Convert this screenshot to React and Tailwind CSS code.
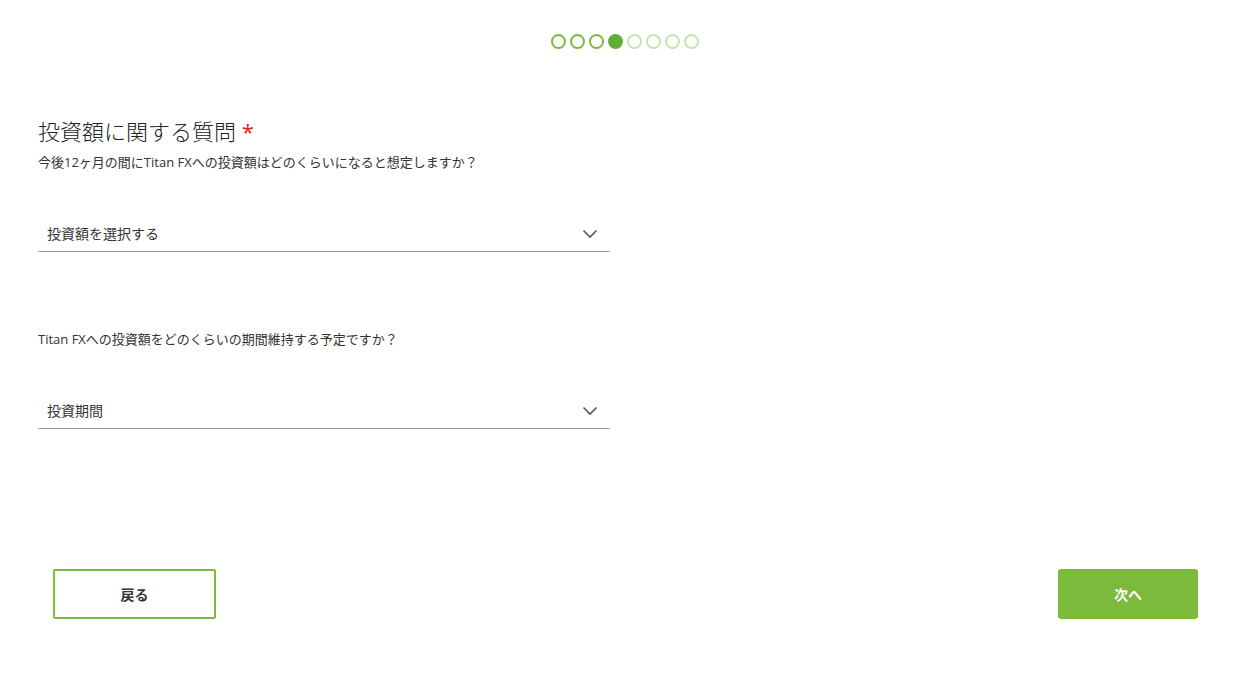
import React from "react";

const steps = [1, 2, 3, 4, 5, 6, 7, 8];
const current = 4;

const Chevron = () => (
  <svg width="16" height="10" viewBox="0 0 16 10" fill="none">
    <path d="M1.5 1.5 L8 8 L14.5 1.5" stroke="#555" strokeWidth="1.6" />
  </svg>
);

const SelectBox = ({ label }) => (
  <div className="w-[572px] h-[36px] flex items-center justify-between pl-[9px] pr-[12px] border-b border-[#9a9a9a] text-[14px] text-[#333]">
    <span>{label}</span>
    <Chevron />
  </div>
);

export default function App() {
  return (
    <div
      className="w-[1252px] h-[691px] bg-white relative"
      style={{ fontFamily: '"Open Sans", "Noto Sans CJK JP", sans-serif' }}
    >
      {/* steps */}
      <div className="flex justify-center gap-[4px] pt-[34px] pr-[3px]">
        {steps.map((s) => (
          <div
            key={s}
            className={
              s < current
                ? "w-[15px] h-[15px] rounded-full border-2 border-[#7cba3b]"
                : s === current
                ? "w-[15px] h-[15px] rounded-full bg-[#5fae3a]"
                : "w-[15px] h-[15px] rounded-full border-2 border-[#c6e3a9]"
            }
          />
        ))}
      </div>

      <div className="pl-[38px] pt-[67px]">
        <h1 className="text-[22px] leading-[30px] font-light text-[#222]">
          投資額に関する質問 <span className="font-normal text-[#e02020]">*</span>
        </h1>
        <p className="text-[13px] leading-[20px] text-[#333] mt-[6px]">
          今後12ヶ月の間にTitan FXへの投資額はどのくらいになると想定しますか？
        </p>
        <div className="mt-[44px]">
          <SelectBox label="投資額を選択する" />
        </div>

        <p className="text-[13px] leading-[20px] text-[#333] mt-[77px]">
          Titan FXへの投資額をどのくらいの期間維持する予定ですか？
        </p>
        <div className="mt-[44px]">
          <SelectBox label="投資期間" />
        </div>
      </div>

      <div className="flex justify-between pl-[53px] pr-[54px] mt-[140px]">
        <button className="w-[163px] h-[50px] border-2 border-[#7cba3b] rounded-[2px] bg-white text-[14px] font-bold text-[#333]">
          戻る
        </button>
        <button className="w-[140px] h-[50px] bg-[#7cba3b] rounded-[3px] text-[14px] font-bold text-white">
          次へ
        </button>
      </div>
    </div>
  );
}
